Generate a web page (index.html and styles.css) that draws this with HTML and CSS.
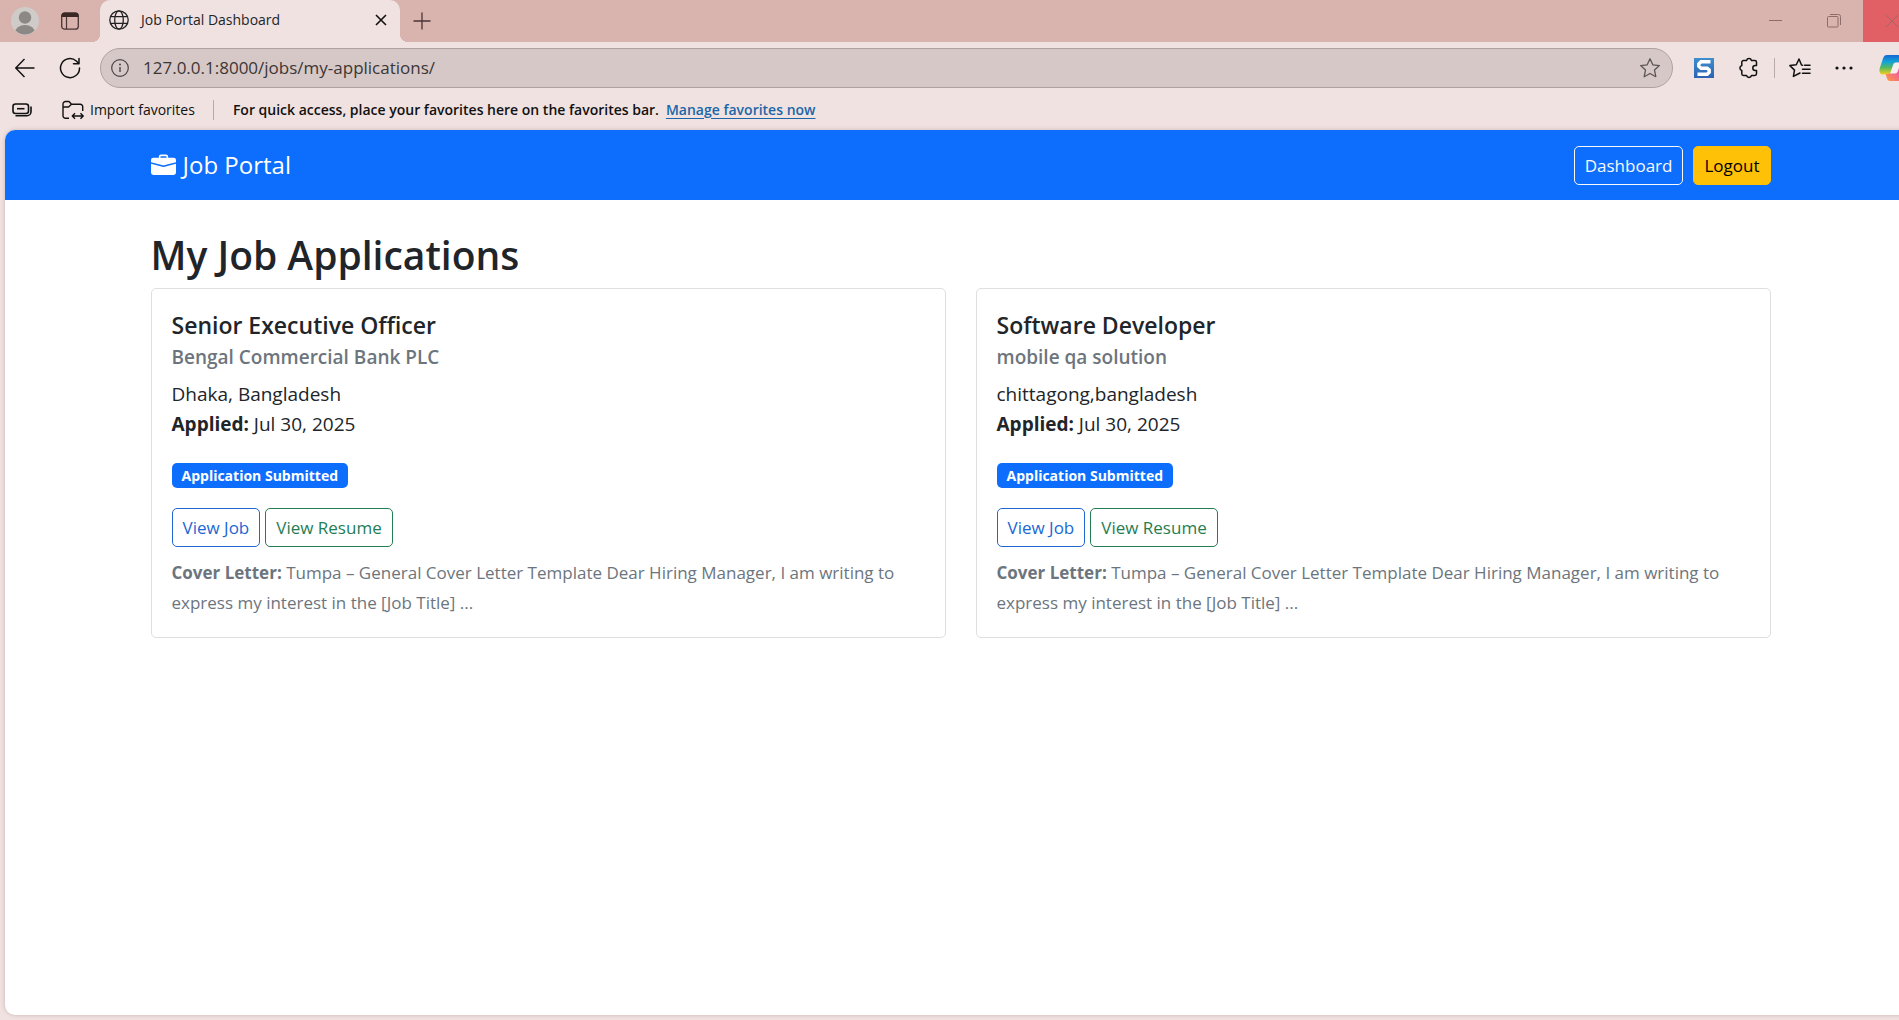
FILE: index.html
```html
<!DOCTYPE html>
<html lang="en">
<head>
<meta charset="utf-8">
<title>Job Portal Dashboard</title>
<link rel="stylesheet" href="styles.css">
</head>
<body>
<div class="browser">
  <header class="titlebar">
    <button class="icon-btn profile" aria-label="Profile">
      <svg width="28" height="28" viewBox="0 0 28 28"><defs><clipPath id="face"><circle cx="14" cy="14" r="13.5"/></clipPath></defs><circle cx="14" cy="14" r="14" fill="#cfcbc8"/><g clip-path="url(#face)" fill="#8b8886"><circle cx="14" cy="10.500" r="6.200"/><ellipse cx="14" cy="25.500" rx="10" ry="7.500"/></g></svg>
    </button>
    <button class="icon-btn workspaces" aria-label="Tab actions">
      <svg width="20" height="20" viewBox="0 0 20 20"><rect x="1.700" y="2.200" width="16.600" height="16" rx="3" fill="none" stroke="#4a3534" stroke-width="1.300"/><path d="M1.500 6V4.500A3 3 0 0 1 4.500 1.500h11a3 3 0 0 1 3 3V6z" fill="#3a2827"/><path d="M6.500 6v12" stroke="#4a3534" stroke-width="1.200"/></svg>
    </button>
    <div class="tab">
      <svg width="20" height="20" viewBox="0 0 20 20" fill="none" stroke="#222" stroke-width="1.300"><circle cx="10" cy="10" r="9.200"/><ellipse cx="10" cy="10" rx="4.300" ry="9.200"/><path d="M1.500 6.700h17M1.500 13.300h17"/></svg>
      <span class="tab-title">Job Portal Dashboard</span>
      <button class="icon-btn" aria-label="Close tab">
        <svg width="12" height="12" viewBox="0 0 12 12" stroke="#111" stroke-width="1.600"><path d="M1 1l10 10M11 1L1 11"/></svg>
      </button>
    </div>
    <button class="icon-btn new-tab" aria-label="New tab">
      <svg width="18" height="18" viewBox="0 0 18 18" stroke="#4a3534" stroke-width="1.300"><path d="M9 .5v17M.5 9h17"/></svg>
    </button>
    <div class="window-controls">
      <button class="win-btn" aria-label="Minimize"><svg width="14" height="14" viewBox="0 0 14 14" stroke="#8d6c69" stroke-width="1"><path d="M0 6.500h13"/></svg></button>
      <button class="win-btn" aria-label="Restore"><svg width="14" height="14" viewBox="0 0 14 14" fill="none" stroke="#8d6c69"><rect x=".5" y="2.500" width="10.500" height="10.500" rx="1"/><path d="M3 .5h8.500a2 2 0 0 1 2 2V11"/></svg></button>
      <button class="win-btn win-close" aria-label="Close"><svg width="14" height="14" viewBox="0 0 14 14" stroke="#a76466"><path d="M.5 .5l13 13M13.500 .5l-13 13"/></svg></button>
    </div>
  </header>

  <div class="toolbar">
    <button class="icon-btn back" aria-label="Back"><svg width="20" height="20" viewBox="0 0 20 20" fill="none" stroke="#111" stroke-width="1.400"><path d="M19.500 10H1M9.500 1L.8 10l8.700 9"/></svg></button>
    <button class="icon-btn reload" aria-label="Refresh"><svg width="22" height="22" viewBox="0 0 22 22" fill="none" stroke="#111" stroke-width="1.500" stroke-linecap="round" stroke-linejoin="round"><path d="M20.500 11A9.500 9.500 0 1 1 17.300 4l2.500 2.600M20 1.500v5.300h-5.500"/></svg></button>
    <form class="address">
      <svg width="18" height="18" viewBox="0 0 18 18"><circle cx="9" cy="9" r="8.300" fill="none" stroke="#4c4545" stroke-width="1.200"/><path d="M9 8v5" stroke="#4c4545" stroke-width="1.400"/><circle cx="9" cy="5.500" r="1" fill="#4c4545"/></svg>
      <input class="url" type="text" aria-label="Address" value="127.0.0.1:8000/jobs/my-applications/">
      <button class="icon-btn" type="button" aria-label="Add to favorites"><svg width="22" height="22" viewBox="0 0 22 22" fill="none" stroke="#5d5555" stroke-width="1.300" stroke-linejoin="round"><path d="M11 1.800l2.800 6 6.600.8-4.900 4.500 1.300 6.600L11 16.500l-5.800 3.200 1.300-6.600L1.600 8.600l6.600-.8z"/></svg></button>
    </form>
    <div class="tools">
      <button class="icon-btn" aria-label="Snagit"><svg width="20" height="20" viewBox="0 0 20 20"><defs><linearGradient id="snag" x2="0" y2="1"><stop stop-color="#3f8fce"/><stop offset="1" stop-color="#2c62b5"/></linearGradient></defs><rect width="20" height="20" fill="url(#snag)"/><path d="M16.500 3.800H7L4.800 6v2.300L7 10.200h6.200l2 1.800v2.200l-2 2H3.500" fill="none" stroke="#fff" stroke-width="3.400"/></svg></button>
      <button class="icon-btn" aria-label="Extensions"><svg width="22" height="22" viewBox="0 0 22 22" fill="none" stroke="#111" stroke-width="1.500" stroke-linejoin="round"><path d="M5.500 3.500h3a2.600 2.600 0 0 1 5 0h3.300a1.700 1.700 0 0 1 1.700 1.700v3.300h-1.200a2.500 2.500 0 0 0 0 5h1.200v3.300a1.700 1.700 0 0 1-1.700 1.700h-3.300a2.600 2.600 0 0 1-5 0h-3a1.700 1.700 0 0 1-1.700-1.700v-3.300a2.600 2.600 0 0 1 0-5V5.200a1.700 1.700 0 0 1 1.700-1.700z"/></svg></button>
      <span class="divider"></span>
      <button class="icon-btn" aria-label="Favorites"><svg width="22" height="22" viewBox="0 0 22 22" fill="none" stroke="#111" stroke-width="1.500" stroke-linejoin="round" stroke-linecap="round"><path d="M13.500 8.200l-1-.2L10 2 7.300 7.700.9 8.600l4.600 4.500-1.100 6.300L10 16.500l1-.5M15.500 8.200H21M13.500 12.200H21M13.500 16.200H21"/></svg></button>
      <button class="icon-btn" aria-label="Settings and more"><svg width="18" height="18" viewBox="0 0 18 18" fill="#111"><circle cx="2" cy="9" r="1.600"/><circle cx="9" cy="9" r="1.600"/><circle cx="16" cy="9" r="1.600"/></svg></button>
    </div>
    <button class="icon-btn copilot" aria-label="Copilot">
      <svg width="30" height="28" viewBox="0 0 30 28"><defs><linearGradient id="cpa" x2="0" y2="1"><stop stop-color="#1767d2"/><stop offset=".35" stop-color="#12a4d8"/><stop offset=".65" stop-color="#58b960"/><stop offset="1" stop-color="#f6cf1c"/></linearGradient><linearGradient id="cpb" x1="1" x2="0" y2="1"><stop stop-color="#a64ee0"/><stop offset=".5" stop-color="#f0609d"/><stop offset="1" stop-color="#ff9a3c"/></linearGradient></defs><path d="M8 1h11c2 0 3 2 3.500 4L24 9h-5c-2 0-3 1-3.500 3l-1.800 5.500c-.7 2-1.500 3-3.700 3H3.500C.5 20.500 0 17 .8 14L4 4.500C4.800 2 6 1 8 1z" fill="url(#cpa)"/><path d="M22 27H11c-2 0-3-2-3.500-4l-.7-3H9c2 0 3-1 3.500-3l1.800-5.500c.7-2 1.500-3 3.700-3h8.500c3 0 3.500 3.500 2.700 6.500L26 23.500c-.8 2.500-2 3.500-4 3.500z" fill="url(#cpb)"/><path d="M11 19.500l3.300-9c.5-1.200 1.200-2 2.700-2h5l-3.300 9c-.5 1.200-1.200 2-2.700 2z" fill="#f7eeee"/></svg>
    </button>
  </div>

  <div class="favorites">
    <button class="icon-btn" aria-label="Collections"><svg width="20" height="16" viewBox="0 0 20 16" fill="none" stroke="#111" stroke-width="1.600"><rect x="1" y="2" width="15.500" height="9.500" rx="2.500"/><path d="M5 6.700h7.500"/><path d="M3.500 13.700h11.500a4 4 0 0 0 4-4V4.500"/></svg></button>
    <button class="import-btn"><svg width="22" height="20" viewBox="0 0 22 20" fill="none" stroke="#111" stroke-width="1.400" stroke-linejoin="round"><path d="M7 18.300H3.500a2.500 2.500 0 0 1-2.500-2.500V4a2.500 2.500 0 0 1 2.500-2.500H7l2.500 2.700h8.800A2.400 2.400 0 0 1 20.700 6.600V11M1 7h5.500l3-2.800M10.500 16h10.500M13 13.300L10.300 16l2.700 2.700M18.500 13.300l2.700 2.700-2.700 2.700"/></svg>Import favorites</button>
    <span class="divider"></span>
    <span class="hint">For quick access, place your favorites here on the favorites bar.</span>
    <a class="manage" href="#favorites">Manage favorites now</a>
  </div>

  <div class="page">
    <nav class="navbar">
      <div class="container navbar-inner">
        <a class="brand" href="#home"><svg width="25" height="25" viewBox="0 0 16 16" fill="#fff"><path d="M6.500 1A1.500 1.500 0 0 0 5 2.500V3H1.500A1.500 1.500 0 0 0 0 4.500v1.384l7.614 2.030a1.500 1.500 0 0 0 .772 0L16 5.884V4.500A1.500 1.500 0 0 0 14.500 3H11v-.5A1.500 1.500 0 0 0 9.500 1zm0 1h3a.5.5 0 0 1 .5.5V3H6v-.5a.5.5 0 0 1 .5-.5"/><path d="M0 12.500A1.500 1.500 0 0 0 1.500 14h13a1.500 1.500 0 0 0 1.500-1.500V6.850L8.129 8.947a.5.5 0 0 1-.258 0L0 6.850z"/></svg><span>Job Portal</span></a>
        <div class="nav-actions">
          <a class="btn btn-outline-light" href="#dashboard">Dashboard</a>
          <a class="btn btn-warning" href="#logout">Logout</a>
        </div>
      </div>
    </nav>
    <main class="container content">
      <h1>My Job Applications</h1>
      <div class="cards">
        <article class="card">
          <h2>Senior Executive Officer</h2>
          <h3>Bengal Commercial Bank PLC</h3>
          <p class="details">Dhaka, Bangladesh<br><strong>Applied:</strong> Jul 30, 2025</p>
          <span class="badge">Application Submitted</span>
          <div class="actions">
            <a class="btn btn-outline-primary" href="#job-1">View Job</a>
            <a class="btn btn-outline-success" href="#resume-1">View Resume</a>
          </div>
          <p class="cover"><strong>Cover Letter:</strong> Tumpa – General Cover Letter Template Dear Hiring Manager, I am writing to express my interest in the [Job Title] ...</p>
        </article>
        <article class="card">
          <h2>Software Developer</h2>
          <h3>mobile qa solution</h3>
          <p class="details">chittagong,bangladesh<br><strong>Applied:</strong> Jul 30, 2025</p>
          <span class="badge">Application Submitted</span>
          <div class="actions">
            <a class="btn btn-outline-primary" href="#job-2">View Job</a>
            <a class="btn btn-outline-success" href="#resume-2">View Resume</a>
          </div>
          <p class="cover"><strong>Cover Letter:</strong> Tumpa – General Cover Letter Template Dear Hiring Manager, I am writing to express my interest in the [Job Title] ...</p>
        </article>
      </div>
    </main>
  </div>
</div>
</body>
</html>
```

FILE: styles.css
```css
* { box-sizing: border-box; }

body {
  margin: 0;
  overflow: hidden;
  background: #f0e2e0;
  color: #212529;
  font-family: "Open Sans", "Noto Sans", sans-serif;
  font-size: 19px;
  line-height: 30px;
}

h1, h2, h3, p { margin: 0; }
button { font: inherit; color: inherit; }
svg { display: block; flex: none; }

/* The window runs slightly past the right edge of the screen */
.browser {
  display: flex;
  flex-direction: column;
  width: calc(100% + 22px);
  min-height: 100vh;
}

.icon-btn {
  display: flex;
  padding: 0;
  border: 0;
  background: none;
}

/* Title bar */
.titlebar {
  display: flex;
  align-items: center;
  height: 42px;
  padding-left: 11px;
  background: #d9b3ad;
}
.workspaces { margin: 0 20px 0 21px; }
.tab {
  position: relative;
  display: flex;
  align-items: center;
  align-self: stretch;
  gap: 12px;
  width: 300px;
  padding: 0 13px 2px 9px;
  border-radius: 10px 10px 0 0;
  background: #f0e2e0;
  font-size: 14px;
}
/* Flared feet on both sides of the active tab */
.tab::before,
.tab::after {
  content: "";
  position: absolute;
  bottom: 0;
  width: 8px;
  height: 8px;
}
.tab::before {
  right: 100%;
  background: radial-gradient(circle at 0 0, transparent 8px, #f0e2e0 8px);
}
.tab::after {
  left: 100%;
  background: radial-gradient(circle at 100% 0, transparent 8px, #f0e2e0 8px);
}
.tab-title { flex: 1; }
.new-tab { margin-left: 13px; }
.window-controls {
  display: flex;
  align-self: stretch;
  margin-left: auto;
}
.win-btn {
  display: flex;
  align-items: center;
  justify-content: center;
  width: 58px;
  padding: 0;
  border: 0;
  background: none;
}
.win-close { background: #e06065; }

/* Toolbar */
.toolbar {
  display: flex;
  align-items: center;
  height: 52px;
  padding-left: 15px;
}
.reload { margin: 0 19px 0 24px; }
.address {
  display: flex;
  align-items: center;
  flex: 1;
  gap: 14px;
  height: 40px;
  padding: 0 11px 0 10px;
  border: 1px solid #aea2a1;
  border-radius: 20px;
  background: #d6c8c6;
}
.url {
  flex: 1;
  padding: 0;
  border: 0;
  outline: 0;
  background: none;
  color: #3b3635;
  font: inherit;
  font-size: 17px;
}
.tools {
  display: flex;
  align-items: center;
  gap: 24px;
  margin: 0 26px 0 21px;
}
.tools .divider { margin: 0 -10px; }
.divider {
  width: 1px;
  height: 20px;
  background: #b9aaa8;
}
.copilot { margin-right: 12px; }

/* Favorites bar */
.favorites {
  display: flex;
  align-items: center;
  height: 36px;
  padding: 0 0 5px 12px;
  color: #111;
  font-size: 14px;
}
.import-btn {
  display: flex;
  align-items: center;
  gap: 6px;
  margin: 0 18px 0 30px;
  padding: 0;
  border: 0;
  background: none;
}
.hint { margin: 0 7px 0 19px; font-weight: 600; }
.manage {
  color: #1b66a8;
  font-weight: 600;
  text-underline-offset: 3px;
}

/* Page */
.page {
  flex: 1;
  margin: 0 5px 5px;
  overflow: hidden;
  border-radius: 10px;
  background: #fff;
  box-shadow: 0 0 4px #c9b5b3;
}
.container {
  max-width: 1650px;
  margin: 0 auto;
  padding: 0 15px;
}
.navbar { background: #0d6efd; }
.navbar-inner {
  display: flex;
  align-items: center;
  justify-content: space-between;
  height: 70px;
}
.brand {
  display: flex;
  align-items: center;
  gap: 7px;
  color: #fff;
  font-size: 24px;
  text-decoration: none;
}
.nav-actions { display: flex; gap: 10px; }

.btn {
  padding: 5px 10px;
  border: 1px solid;
  border-radius: 5px;
  font-size: 17px;
  line-height: 27px;
  text-decoration: none;
}
.btn-outline-light { color: #f8f9fa; }
.btn-warning { border-color: #ffc107; background: #ffc107; color: #000; }
.btn-outline-primary { color: #2067d4; }
.btn-outline-success { color: #257d54; }

.content { padding-top: 31px; }
h1 {
  margin-bottom: 9px;
  font-size: 39px;
  font-weight: 600;
  line-height: 48px;
}
.cards {
  display: grid;
  grid-template-columns: 1fr 1fr;
  gap: 30px;
}
.card {
  padding: 21px 20px 19px;
  border: 1px solid #dfdfdf;
  border-radius: 5px;
}
h2 {
  margin-bottom: 5px;
  font-size: 23px;
  font-weight: 600;
  line-height: 30px;
}
h3 {
  margin-bottom: 10px;
  color: #6c757d;
  font-size: 19px;
  font-weight: 600;
  line-height: 24px;
}
.details { margin-bottom: 24px; }
.badge {
  display: block;
  width: fit-content;
  padding: 0 10px;
  border-radius: 5px;
  background: #0d6efd;
  color: #fff;
  font-size: 14px;
  font-weight: 700;
  line-height: 25px;
}
.actions {
  display: flex;
  gap: 5px;
  margin: 20px 0 11px;
}
.cover { color: #6c757d; font-size: 17px; }
```
